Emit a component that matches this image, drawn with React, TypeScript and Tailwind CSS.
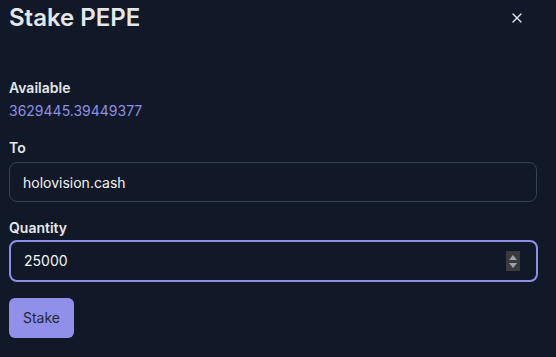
import { X } from 'lucide-react';

export default function App() {
  return (
    <div className="w-[556px] h-[357px] bg-[#111827] text-[#e5e7eb] font-['Inter','Liberation_Sans',sans-serif] px-[9px] overflow-hidden">
      <div className="flex items-center justify-between h-[36px]">
        <h2 className="text-2xl font-semibold leading-8 text-[#e5e7eb]">Stake PEPE</h2>
        <button className="mr-[22px] text-[#e5e7eb]">
          <X size={16} strokeWidth={2} />
        </button>
      </div>

      <div className="mt-[42px]">
        <p className="text-sm font-semibold leading-5">Available</p>
        <p className="mt-[3px] text-sm leading-5 text-[#8e8fe6]">3629445.39449377</p>
      </div>

      <div className="mt-[17px]">
        <label className="block text-sm font-semibold leading-5">To</label>
        <input
          readOnly
          value="holovision.cash"
          className="mt-1 w-[528px] h-[40px] rounded-lg border border-[#374151] bg-[#111827] px-[13px] text-sm text-[#f3f4f6] outline-none"
        />
      </div>

      <div className="mt-[16px]">
        <label className="block text-sm font-semibold leading-5">Quantity</label>
        <div className="mt-[2px] w-[529px] h-[42px] rounded-lg border-2 border-[#8e8fea] flex items-center pl-[13px] pr-[16px]">
          <span className="flex-1 text-sm text-[#f3f4f6]">25000</span>
          <div className="w-[14px] h-[20px] bg-[#3b3b3b] flex flex-col items-center justify-center gap-[3px]">
            <span className="w-0 h-0 border-x-[4px] border-x-transparent border-b-[5px] border-b-[#9ca3af]" />
            <span className="w-0 h-0 border-x-[4px] border-x-transparent border-t-[5px] border-t-[#9ca3af]" />
          </div>
        </div>
      </div>

      <button className="mt-[16px] w-[65px] h-[40px] rounded-md bg-[#908fea] text-sm text-[#1f2937]">Stake</button>
    </div>
  );
}
